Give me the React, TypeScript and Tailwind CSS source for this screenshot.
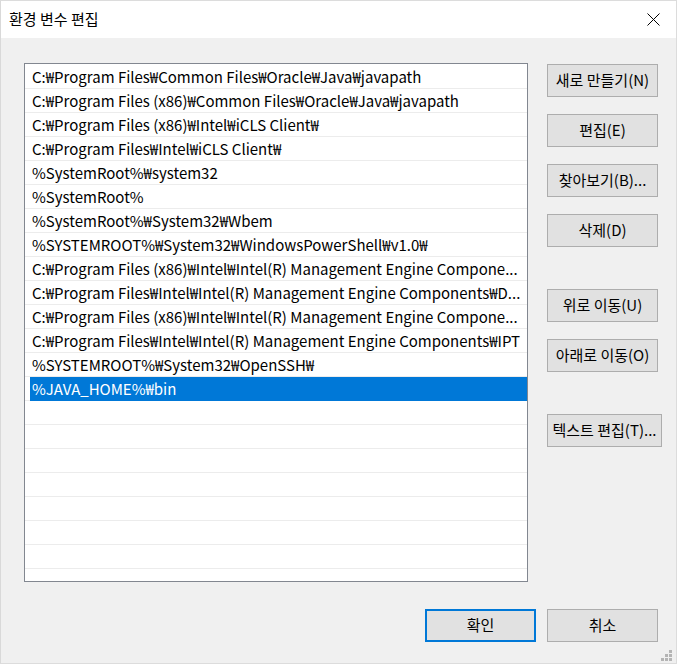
import React from 'react';

const paths = [
  'C:₩Program Files₩Common Files₩Oracle₩Java₩javapath',
  'C:₩Program Files (x86)₩Common Files₩Oracle₩Java₩javapath',
  'C:₩Program Files (x86)₩Intel₩iCLS Client₩',
  'C:₩Program Files₩Intel₩iCLS Client₩',
  '%SystemRoot%₩system32',
  '%SystemRoot%',
  '%SystemRoot%₩System32₩Wbem',
  '%SYSTEMROOT%₩System32₩WindowsPowerShell₩v1.0₩',
  'C:₩Program Files (x86)₩Intel₩Intel(R) Management Engine Compone...',
  'C:₩Program Files₩Intel₩Intel(R) Management Engine Components₩D...',
  'C:₩Program Files (x86)₩Intel₩Intel(R) Management Engine Compone...',
  'C:₩Program Files₩Intel₩Intel(R) Management Engine Components₩IPT',
  '%SYSTEMROOT%₩System32₩OpenSSH₩',
  '%JAVA_HOME%₩bin',
];

const selected = 13;
const rowCount = 21;

function WinButton({ label, wide, className = '' }: { label: string; wide?: boolean; className?: string }) {
  return (
    <button
      className={`h-[33px] ${wide ? 'w-[115px]' : 'w-[111px]'} bg-[#e1e1e1] border border-[#adadad] text-[15px] text-black flex items-center justify-center whitespace-nowrap ${className}`}
    >
      {label}
    </button>
  );
}

export default function App() {
  const rows = Array.from({ length: rowCount }, (_, i) => paths[i] ?? '');

  return (
    <div className="w-[677px] h-[664px] bg-[#f0f0f0] border-l border-t border-r border-b border-l-[#d9d9d9] border-t-[#dcdcdc] border-r-[#dcdcdc] border-b-[#dcdcdc] flex flex-col overflow-hidden font-['Noto_Sans_CJK_KR',sans-serif] text-black relative">
      {/* Title bar */}
      <div className="h-[37px] bg-white flex items-center justify-between pl-[8px] pr-[15px] shrink-0">
        <span className="text-[15px]">환경 변수 편집</span>
        <svg width="13" height="13" viewBox="0 0 13 13" className="mr-[1px]">
          <path d="M0.5 0.5 L12.5 12.5 M12.5 0.5 L0.5 12.5" stroke="#000" strokeWidth="1" fill="none" />
        </svg>
      </div>

      {/* Body */}
      <div className="flex pl-[23px] pt-[25px]">
        <div className="w-[504px] h-[519px] border border-[#828790] bg-white pt-[1px] overflow-hidden">
          {rows.map((p, i) => (
            <div key={i} className="h-[24px] border-b border-[#ececec] flex">
              <div
                className={`ml-[5px] flex-1 h-[24px] -mb-[1px] pl-[2px] flex items-center text-[15px] whitespace-nowrap overflow-hidden ${
                  i === selected ? 'bg-[#0078d7] text-white' : ''
                }`}
              >
                {p}
              </div>
            </div>
          ))}
        </div>

        <div className="ml-[19px] pt-[1px] flex flex-col">
          <WinButton label="새로 만들기(N)" />
          <WinButton label="편집(E)" className="mt-[17px]" />
          <WinButton label="찾아보기(B)..." className="mt-[17px]" />
          <WinButton label="삭제(D)" className="mt-[17px]" />
          <WinButton label="위로 이동(U)" className="mt-[42px]" />
          <WinButton label="아래로 이동(O)" className="mt-[17px]" />
          <WinButton label="텍스트 편집(T)..." wide className="mt-[42px]" />
        </div>
      </div>

      {/* Footer buttons */}
      <div className="flex pl-[424px] pt-[27px] gap-[11px]">
        <button className="h-[33px] w-[111px] bg-[#e1e1e1] border-2 border-[#0078d7] text-[15px] flex items-center justify-center">
          확인
        </button>
        <WinButton label="취소" />
      </div>

      {/* Resize grip */}
      <div className="absolute right-[4px] bottom-[2px] grid grid-cols-3 gap-[1px]">
        <span className="w-[3px] h-[3px]" />
        <span className="w-[3px] h-[3px]" />
        <span className="w-[3px] h-[3px] bg-[#b4b4b4]" />
        <span className="w-[3px] h-[3px]" />
        <span className="w-[3px] h-[3px] bg-[#b4b4b4]" />
        <span className="w-[3px] h-[3px] bg-[#b4b4b4]" />
        <span className="w-[3px] h-[3px] bg-[#b4b4b4]" />
        <span className="w-[3px] h-[3px] bg-[#b4b4b4]" />
        <span className="w-[3px] h-[3px] bg-[#b4b4b4]" />
      </div>
    </div>
  );
}
